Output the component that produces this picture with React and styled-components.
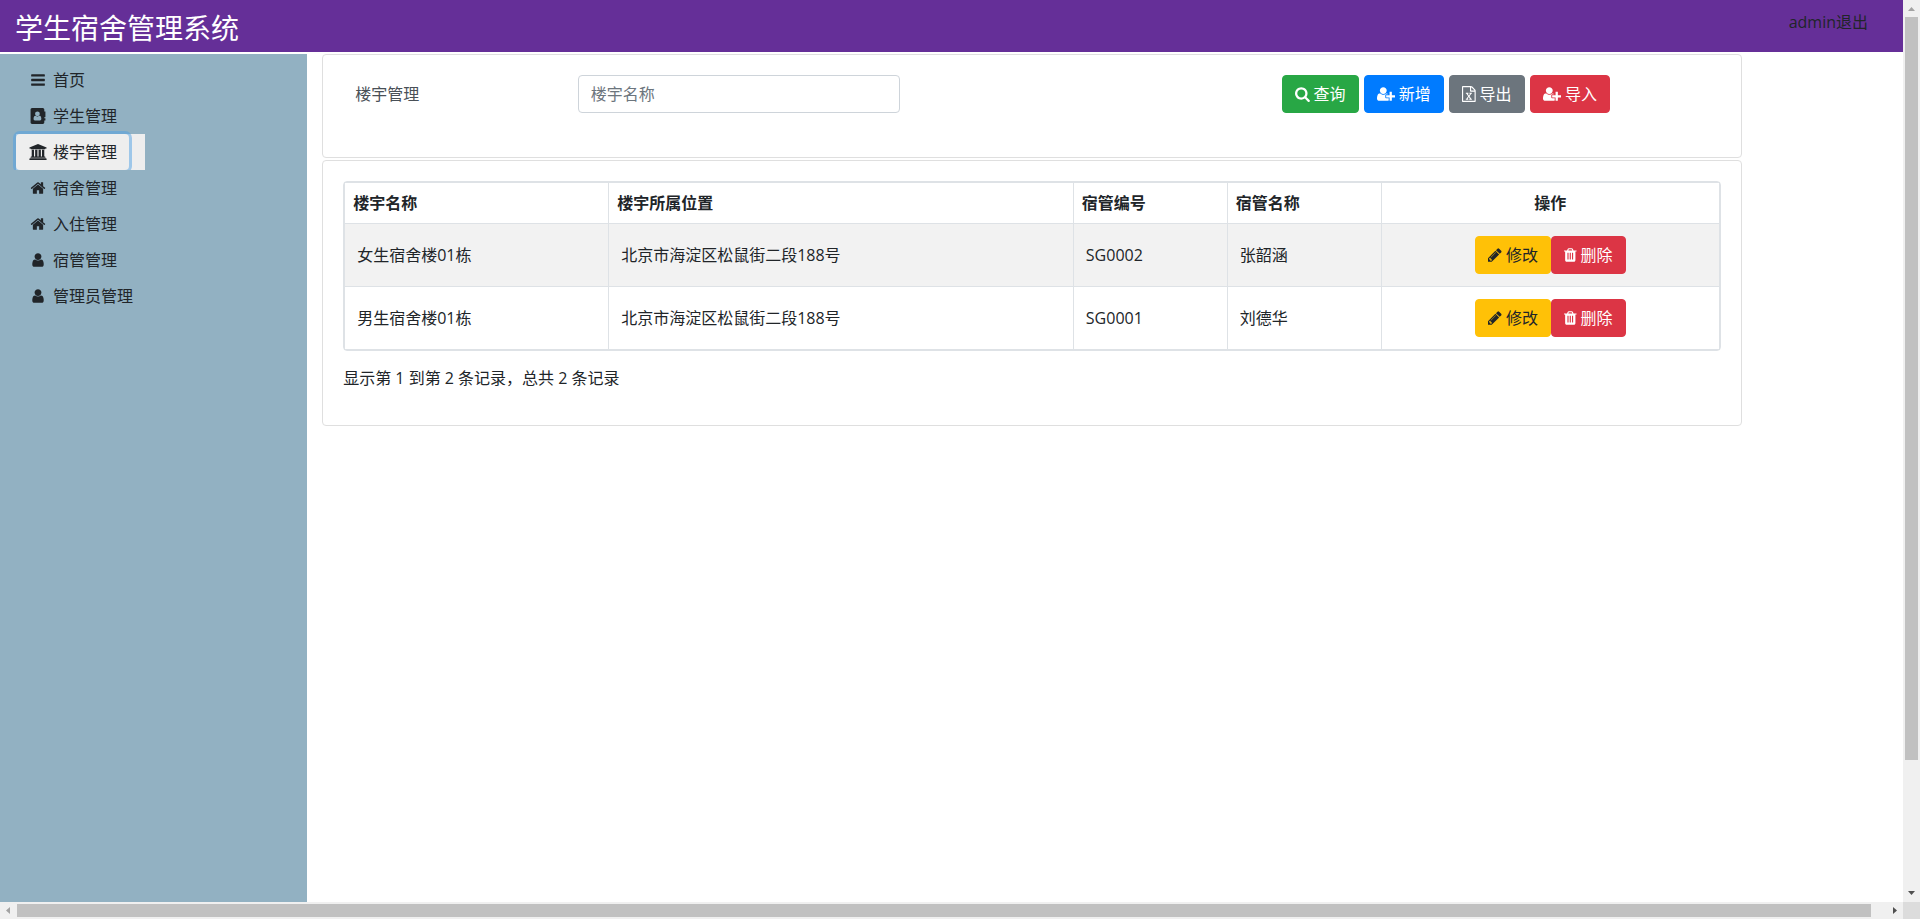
import React, { Component } from 'react';
import styled, { createGlobalStyle, ThemeProvider } from 'styled-components';

const theme = {
	primaryColor: '#652f98',
	sidebarColor: '#92b1c2',
	textColor: '#212529',
	borderColor: '#dee2e6',
};

const GlobalStyle = createGlobalStyle`
	* {
		box-sizing: border-box;
	}

	body {
		margin: 0;
		background-color: #fff;
		color: #212529;
		font-family: 'Open Sans', 'Noto Sans CJK SC', sans-serif;
		font-size: 16px;
		line-height: 24px;
	}

	button, input {
		font: inherit;
		margin: 0;
	}
`;

const icons = {
	bars: {
		box: '128 0 1536 1792',
		d: 'M1664 1344v128q0 26-19 45t-45 19h-1408q-26 0-45-19t-19-45v-128q0-26 19-45t45-19h1408q26 0 45 19t19 45zm0-512v128q0 26-19 45t-45 19h-1408q-26 0-45-19t-19-45v-128q0-26 19-45t45-19h1408q26 0 45 19t19 45zm0-512v128q0 26-19 45t-45 19h-1408q-26 0-45-19t-19-45v-128q0-26 19-45t45-19h1408q26 0 45 19t19 45z',
	},
	addressBook: {
		box: '0 0 1664 1792',
		d: 'M1028 644q0 107-76.5 183t-183.5 76-183.5-76-76.5-183q0-108 76.5-184t183.5-76 183.5 76 76.5 184zm-48 220q46 0 82.5 17t60 47.5 39.5 67 24 81 11.5 82.5 3.5 79q0 67-39.5 118.5t-105.5 51.5h-576q-66 0-105.5-51.5t-39.5-118.5q0-48 4.5-93.5t18.5-98.5 36.5-91.5 63-64.5 93.5-26h5q7 4 32 19.5t35.5 21 33 17 37 16 35 9 39.5 4.5 39.5-4.5 35-9 37-16 33-17 35.5-21 32-19.5zm684-256q0 13-9.5 22.5t-22.5 9.5h-96v128h96q13 0 22.5 9.5t9.5 22.5v192q0 13-9.5 22.5t-22.5 9.5h-96v128h96q13 0 22.5 9.5t9.5 22.5v192q0 13-9.5 22.5t-22.5 9.5h-96v224q0 66-47 113t-113 47h-1216q-66 0-113-47t-47-113v-1472q0-66 47-113t113-47h1216q66 0 113 47t47 113v224h96q13 0 22.5 9.5t9.5 22.5v192q0 13-9.5 22.5t-22.5 9.5h-96v128h96q13 0 22.5 9.5t9.5 22.5v192z',
	},
	bank: {
		box: '0 0 1920 1792',
		d: 'M960 0l960 384v128h-128q0 26-20.5 45t-48.5 19h-1526q-28 0-48.5-19t-20.5-45h-128v-128zm-704 640h256v768h128v-768h256v768h128v-768h256v768h128v-768h256v768h59q28 0 48.5 19t20.5 45v64h-1664v-64q0-26 20.5-45t48.5-19h59v-768zm1595 960q28 0 48.5 19t20.5 45v128h-1920v-128q0-26 20.5-45t48.5-19h1782z',
	},
	home: {
		box: '64 0 1664 1792',
		d: 'M1472 992v480q0 26-19 45t-45 19h-384v-384h-256v384h-384q-26 0-45-19t-19-45v-480q0-1 .5-3t.5-3l575-474 575 474q1 2 1 6zm223-69l-62 74q-8 9-21 11h-3q-13 0-21-7l-692-577-692 577q-12 8-24 7-13-2-21-11l-62-74q-8-10-7-23.5t11-21.5l719-599q32-26 76-26t76 26l244 204v-195q0-14 9-23t23-9h192q14 0 23 9t9 23v408l219 182q10 8 11 21.5t-7 23.5z',
	},
	user: {
		box: '256 0 1280 1792',
		d: 'M1536 1399q0 109-62.5 187t-150.5 78h-854q-88 0-150.5-78t-62.5-187q0-85 8.5-160.5t31.5-152 58.5-131 94-89 134.5-34.5q131 128 313 128t313-128q76 0 134.5 34.5t94 89 58.5 131 31.5 152 8.5 160.5zm-256-887q0 159-112.5 271.5t-271.5 112.5-271.5-112.5-112.5-271.5 112.5-271.5 271.5-112.5 271.5 112.5 112.5 271.5z',
	},
	search: {
		box: '64 0 1664 1792',
		d: 'M1216 832q0-185-131.5-316.5t-316.5-131.5-316.5 131.5-131.5 316.5 131.5 316.5 316.5 131.5 316.5-131.5 131.5-316.5zm512 832q0 52-38 90t-90 38q-54 0-90-38l-343-342q-179 124-399 124-143 0-273.5-55.5t-225-150-150-225-55.5-273.5 55.5-273.5 150-225 225-150 273.5-55.5 273.5 55.5 225 150 150 225 55.5 273.5q0 220-124 399l343 343q37 37 37 90z',
	},
	userPlus: {
		box: '0 0 2048 1792',
		d: 'M704 896q-159 0-271.5-112.5t-112.5-271.5 112.5-271.5 271.5-112.5 271.5 112.5 112.5 271.5-112.5 271.5-271.5 112.5zm960 128h352q13 0 22.5 9.5t9.5 22.5v192q0 13-9.5 22.5t-22.5 9.5h-352v352q0 13-9.5 22.5t-22.5 9.5h-192q-13 0-22.5-9.5t-9.5-22.5v-352h-352q-13 0-22.5-9.5t-9.5-22.5v-192q0-13 9.5-22.5t22.5-9.5h352v-352q0-13 9.5-22.5t22.5-9.5h192q13 0 22.5 9.5t9.5 22.5v352zm-736 224q0 52 38 90t90 38h256v238q-68 50-171 50h-874q-121 0-194-69t-73-190q0-53 3.5-103.5t14-109 26.5-108.5 43-97.5 62-81 85.5-53.5 111.5-20q19 0 39 17 79 61 154.5 91.5t164.5 30.5 164.5-30.5 154.5-91.5q20-17 39-17 132 0 217 96h-223q-52 0-90 38t-38 90v192z',
	},
	excel: {
		box: '128 0 1536 1792',
		d: 'M1596 380q28 28 48 76t20 88v1152q0 40-28 68t-68 28h-1344q-40 0-68-28t-28-68v-1600q0-40 28-68t68-28h896q40 0 88 20t76 48zm-444-244v376h376q-10-29-22-41l-313-313q-12-12-41-22zm384 1528v-1024h-416q-40 0-68-28t-28-68v-416h-768v1536h1280zm-979-234v106h281v-106h-75l103-161q5-7 10-16.5t7.5-13.5 3.5-4h2q1 4 5 10 2 4 4.5 7.5t6 8 6.5 8.5l107 161h-76v106h291v-106h-68l-192-273 195-282h67v-107h-279v107h74l-103 159q-4 7-10 16.5t-9 13.5l-2 3h-2q-1-4-5-10-6-11-17-23l-106-159h76v-107h-290v107h68l189 272-194 283h-68z',
	},
	pencil: {
		box: '128 0 1536 1792',
		d: 'M491 1536l91-91-235-235-91 91v107h128v128h107zm523-928q0-22-22-22-10 0-17 7l-542 542q-7 7-7 17 0 22 22 22 10 0 17-7l542-542q7-7 7-17zm-54-192l416 416-832 832h-416v-416zm683 96q0 53-37 90l-166 166-416-416 166-165q36-38 90-38 53 0 91 38l235 234q37 39 37 91z',
	},
	trash: {
		box: '192 0 1408 1792',
		d: 'M704 1376v-704q0-14-9-23t-23-9h-64q-14 0-23 9t-9 23v704q0 14 9 23t23 9h64q14 0 23-9t9-23zm256 0v-704q0-14-9-23t-23-9h-64q-14 0-23 9t-9 23v704q0 14 9 23t23 9h64q14 0 23-9t9-23zm256 0v-704q0-14-9-23t-23-9h-64q-14 0-23 9t-9 23v704q0 14 9 23t23 9h64q14 0 23-9t9-23zm-544-992h448l-48-117q-7-9-17-11h-317q-10 2-17 11zm928 32v64q0 14-9 23t-23 9h-96v948q0 83-47 143.5t-113 60.5h-832q-66 0-113-58.5t-47-141.5v-952h-96q-14 0-23-9t-9-23v-64q0-14 9-23t23-9h309l70-167q15-37 54-63t79-26h320q40 0 79 26t54 63l70 167h309q14 0 23 9t9 23z',
	},
};

const IconSvg = styled.svg`
	height: 16px;
	flex: none;
	fill: currentColor;
	fill-rule: evenodd;
`;

const Icon = ({ name }) => (
	<IconSvg viewBox={icons[name].box} aria-hidden="true">
		<path d={icons[name].d} />
	</IconSvg>
);

const Window = styled.div`
	display: grid;
	grid-template-columns: minmax(0, 1fr) 17px;
	grid-template-rows: minmax(0, 1fr) 17px;
	height: 100vh;
`;

const Page = styled.div`
	display: flex;
	flex-direction: column;
	overflow: hidden;
`;

const Header = styled.header`
	display: flex;
	justify-content: space-between;
	align-items: flex-start;
	padding: 10px 35px 6px 15px;
	margin-bottom: 2px;
	background-color: ${props => props.theme.primaryColor};

	h1 {
		margin: 0;
		font-size: 28px;
		font-weight: 400;
		line-height: 36px;
		color: #fff;
	}

	a {
		color: ${props => props.theme.textColor};
		text-decoration: none;
	}
`;

const Body = styled.div`
	display: flex;
	flex: 1;
`;

const Sidebar = styled.nav`
	width: 16vw;
	padding: 8px 16px;
	background-color: ${props => props.theme.sidebarColor};

	ul {
		display: flex;
		flex-direction: column;
		align-items: flex-start;
		margin: 0;
		padding: 0;
		list-style: none;
	}
`;

const MenuItem = styled.li`
	height: 36px;
	padding-right: 16px;
	background-color: ${props => (props.$active ? '#eee' : 'transparent')};
	clip-path: inset(-3px -3px 0 -3px);
`;

const MenuButton = styled.button`
	display: flex;
	align-items: center;
	gap: 5px;
	padding: 6px 12px;
	border: none;
	border-radius: 4px;
	background: none;
	color: ${props => props.theme.textColor};
	box-shadow: ${props => (props.$active ? '0 0 0 3px rgba(77, 159, 228, 0.5)' : 'none')};
	cursor: pointer;

	svg {
		width: 20px;
	}
`;

const Main = styled.main`
	display: flex;
	flex-direction: column;
	gap: 2px;
	width: calc(74vw + 14px);
	padding-left: 15px;
`;

const Card = styled.section`
	padding: 20px;
	border: 1px solid #dfdfdf;
	border-radius: 4px;
`;

const SearchForm = styled.form`
	display: grid;
	grid-template-columns: 2fr 3fr 3fr 4fr;
	align-items: center;
	margin: 0 -15px 24px;

	label {
		padding-left: 27px;
		color: #495057;
	}
`;

const SearchField = styled.div`
	padding: 0 15px;

	input {
		display: block;
		width: 100%;
		height: 38px;
		padding: 6px 12px;
		border: 1px solid #ced4da;
		border-radius: 4px;
		background-color: #fff;
		color: #495057;
	}

	input::placeholder {
		color: #6c757d;
	}
`;

const Toolbar = styled.div`
	grid-column: 4;
	display: flex;
	gap: 5px;
	padding-left: 15px;
`;

const Button = styled.button`
	display: flex;
	align-items: center;
	gap: 4px;
	height: 38px;
	padding: 6px 12px;
	border: 1px solid ${props => props.$color};
	border-radius: 4px;
	background-color: ${props => props.$color};
	color: ${props => (props.$dark ? props.theme.textColor : '#fff')};
	white-space: nowrap;
	cursor: pointer;
`;

const TableBox = styled.div`
	border: 1px solid ${props => props.theme.borderColor};
	border-radius: 4px;
`;

const Table = styled.table`
	width: 100%;
	border-collapse: collapse;
	table-layout: fixed;

	th, td {
		border: 1px solid ${props => props.theme.borderColor};
		text-align: left;
	}

	th {
		padding: 8px;
		font-weight: bold;
	}

	th:last-child {
		text-align: center;
	}

	td {
		padding: 12px;
	}

	tbody tr:nth-child(odd) {
		background-color: #f2f2f2;
	}
`;

const Column = styled.col`
	width: ${props => props.$width};
`;

const Actions = styled.div`
	display: flex;
	justify-content: center;
`;

const Summary = styled.div`
	padding: 15px 0;
`;

const ScrollTrack = styled.div`
	display: flex;
	flex-direction: ${props => (props.$vertical ? 'column' : 'row')};
	background-color: #f0f0f0;
`;

const ScrollArrow = styled.svg`
	width: 17px;
	height: 17px;
	flex: none;
	fill: ${props => (props.$disabled ? '#a3a3a3' : '#505050')};
`;

const ScrollThumb = styled.div`
	flex: ${props => props.$size} 0 0;
	margin: ${props => (props.$vertical ? '0 2px' : '2px 0')};
	background-color: #c1c1c1;
`;

const ScrollRest = styled.div`
	flex: ${props => props.$size} 0 0;
`;

const ScrollCorner = styled.div`
	background-color: #dcdcdc;
`;

const menu = [
	{ icon: 'bars', text: '首页' },
	{ icon: 'addressBook', text: '学生管理' },
	{ icon: 'bank', text: '楼宇管理' },
	{ icon: 'home', text: '宿舍管理' },
	{ icon: 'home', text: '入住管理' },
	{ icon: 'user', text: '宿管管理' },
	{ icon: 'user', text: '管理员管理' },
];

const columns = [
	{ text: '楼宇名称', width: '19.2%' },
	{ text: '楼宇所属位置', width: '33.8%' },
	{ text: '宿管编号', width: '11.2%' },
	{ text: '宿管名称', width: '11.2%' },
	{ text: '操作', width: '24.6%' },
];

const buildings = [
	{ name: '女生宿舍楼01栋', address: '北京市海淀区松鼠街二段188号', code: 'SG0002', manager: '张韶涵' },
	{ name: '男生宿舍楼01栋', address: '北京市海淀区松鼠街二段188号', code: 'SG0001', manager: '刘德华' },
];

class App extends Component {
	constructor(props) {
		super(props);
		this.state = {
			active: '楼宇管理',
			keyword: '',
		};
	}

	handleKeyword = e => {
		this.setState({ keyword: e.target.value });
	}

	handleSubmit = e => {
		e.preventDefault();
	}

	render() {
		const { active, keyword } = this.state;

		return (
			<ThemeProvider theme={theme}>
				<GlobalStyle />
				<Window lang="zh-CN">
					<Page>
						<Header>
							<h1>学生宿舍管理系统</h1>
							<a href="#logout">admin退出</a>
						</Header>
						<Body>
							<Sidebar>
								<ul>
									{menu.map(each => (
										<MenuItem key={each.text} $active={each.text === active}>
											<MenuButton
												type="button"
												$active={each.text === active}
												onClick={() => this.setState({ active: each.text })}
											>
												<Icon name={each.icon} />
												{each.text}
											</MenuButton>
										</MenuItem>
									))}
								</ul>
							</Sidebar>
							<Main>
								<Card>
									<SearchForm onSubmit={this.handleSubmit}>
										<label htmlFor="keyword">楼宇管理</label>
										<SearchField>
											<input
												id="keyword"
												type="text"
												placeholder="楼宇名称"
												value={keyword}
												onChange={this.handleKeyword}
											/>
										</SearchField>
										<Toolbar>
											<Button type="submit" $color="#28a745"><Icon name="search" />查询</Button>
											<Button type="button" $color="#007bff"><Icon name="userPlus" />新增</Button>
											<Button type="button" $color="#6c757d"><Icon name="excel" />导出</Button>
											<Button type="button" $color="#dc3545"><Icon name="userPlus" />导入</Button>
										</Toolbar>
									</SearchForm>
								</Card>
								<Card>
									<TableBox>
										<Table>
											<colgroup>
												{columns.map(each => <Column key={each.text} $width={each.width} />)}
											</colgroup>
											<thead>
												<tr>
													{columns.map(each => <th key={each.text} scope="col">{each.text}</th>)}
												</tr>
											</thead>
											<tbody>
												{buildings.map(each => (
													<tr key={each.code}>
														<td>{each.name}</td>
														<td>{each.address}</td>
														<td>{each.code}</td>
														<td>{each.manager}</td>
														<td>
															<Actions>
																<Button type="button" $color="#ffc107" $dark><Icon name="pencil" />修改</Button>
																<Button type="button" $color="#dc3545"><Icon name="trash" />删除</Button>
															</Actions>
														</td>
													</tr>
												))}
											</tbody>
										</Table>
									</TableBox>
									<Summary>显示第 1 到第 2 条记录，总共 2 条记录</Summary>
								</Card>
							</Main>
						</Body>
					</Page>
					<ScrollTrack $vertical aria-hidden="true">
						<ScrollArrow viewBox="0 0 17 17" $disabled><path d="M5 11h7L8.500 7z" /></ScrollArrow>
						<ScrollThumb $vertical $size={743} />
						<ScrollRest $size={125} />
						<ScrollArrow viewBox="0 0 17 17"><path d="M5 6h7L8.500 10z" /></ScrollArrow>
					</ScrollTrack>
					<ScrollTrack aria-hidden="true">
						<ScrollArrow viewBox="0 0 17 17" $disabled><path d="M10 5v7L6 8.500z" /></ScrollArrow>
						<ScrollThumb $size={1854} />
						<ScrollRest $size={15} />
						<ScrollArrow viewBox="0 0 17 17"><path d="M7 5v7l4-3.500z" /></ScrollArrow>
					</ScrollTrack>
					<ScrollCorner />
				</Window>
			</ThemeProvider>
		);
	}
}

export default App;
